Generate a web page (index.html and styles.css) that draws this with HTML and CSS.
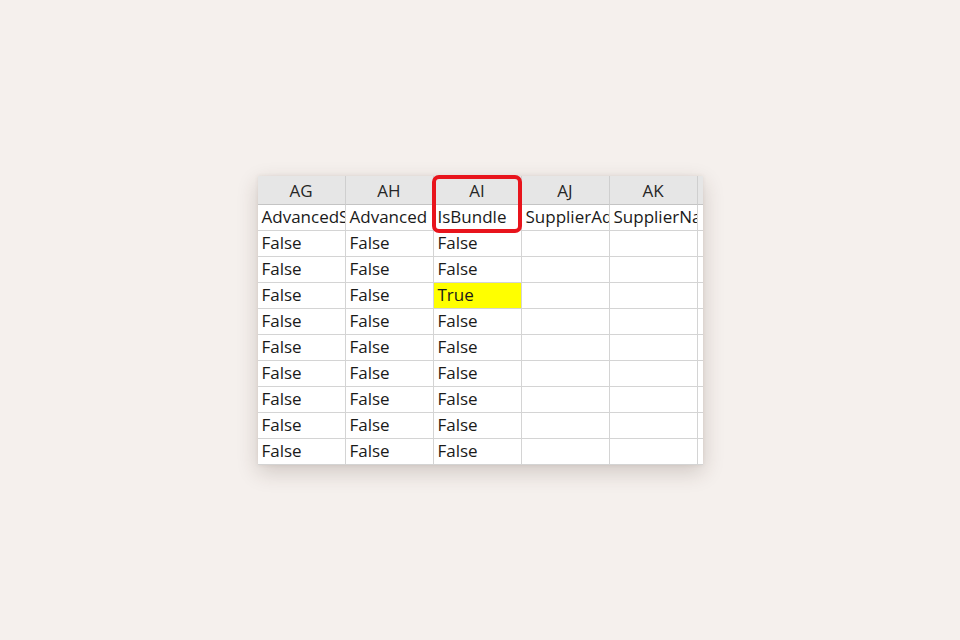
FILE: index.html
```html
<!DOCTYPE html>
<html>
<head>
<meta charset="utf-8">
<link rel="stylesheet" href="styles.css">
</head>
<body>
<div class="stage">
  <div class="sheet">
    <div class="grid">
      <div class="col-head">AG</div><div class="col-head">AH</div><div class="col-head">AI</div><div class="col-head">AJ</div><div class="col-head">AK</div><div class="col-head edge"></div>

      <div class="cell">AdvancedS</div><div class="cell">Advanced</div><div class="cell">IsBundle</div><div class="cell">SupplierAd</div><div class="cell">SupplierNa</div><div class="cell edge"></div>

      <div class="cell">False</div><div class="cell">False</div><div class="cell">False</div><div class="cell"></div><div class="cell"></div><div class="cell edge"></div>
      <div class="cell">False</div><div class="cell">False</div><div class="cell">False</div><div class="cell"></div><div class="cell"></div><div class="cell edge"></div>
      <div class="cell">False</div><div class="cell">False</div><div class="cell hl">True</div><div class="cell"></div><div class="cell"></div><div class="cell edge"></div>
      <div class="cell">False</div><div class="cell">False</div><div class="cell">False</div><div class="cell"></div><div class="cell"></div><div class="cell edge"></div>
      <div class="cell">False</div><div class="cell">False</div><div class="cell">False</div><div class="cell"></div><div class="cell"></div><div class="cell edge"></div>
      <div class="cell">False</div><div class="cell">False</div><div class="cell">False</div><div class="cell"></div><div class="cell"></div><div class="cell edge"></div>
      <div class="cell">False</div><div class="cell">False</div><div class="cell">False</div><div class="cell"></div><div class="cell"></div><div class="cell edge"></div>
      <div class="cell">False</div><div class="cell">False</div><div class="cell">False</div><div class="cell"></div><div class="cell"></div><div class="cell edge"></div>
      <div class="cell">False</div><div class="cell">False</div><div class="cell">False</div><div class="cell"></div><div class="cell"></div><div class="cell edge"></div>
    </div>
    <div class="callout"></div>
  </div>
</div>
</body>
</html>
```

FILE: styles.css
```css
* { box-sizing: border-box; }
html, body { margin: 0; padding: 0; }
body {
  background: #f5f0ed;
  font-family: "Open Sans", "Noto Sans", sans-serif;
  color: #1f1f1f;
}
.stage {
  width: 960px;
  height: 640px;
  display: flex;
  align-items: center;
  justify-content: center;
}
.sheet {
  position: relative;
  width: 445px;
  height: 289px;
  background: #ffffff;
  box-shadow: 0 7px 20px rgba(60, 40, 30, 0.2), 0 0 4px rgba(60, 40, 30, 0.08);
}
.grid {
  display: grid;
  grid-template-columns: 88px 88px 88px 88px 88px 5px;
  grid-template-rows: 29px repeat(10, 26px);
  overflow: hidden;
  width: 445px;
  height: 289px;
}
.col-head {
  background: #e6e6e6;
  border-right: 1px solid #cfcfcf;
  border-bottom: 1px solid #c4c4c4;
  display: flex;
  align-items: center;
  justify-content: center;
  font-size: 17px;
  color: #262626;
  padding-top: 1px;
}
.cell {
  border-right: 1px solid #d4d4d4;
  border-bottom: 1px solid #d4d4d4;
  font-size: 17px;
  line-height: 23px;
  padding-left: 4px;
  white-space: nowrap;
  overflow: hidden;
  color: #1a1a1a;
}
.edge { border-right: none; padding: 0; }
.hl { background: #ffff00; }
.callout {
  position: absolute;
  left: 174px;
  top: -1px;
  width: 90px;
  height: 58px;
  border: 4px solid #e8141c;
  border-radius: 7px;
}
```
